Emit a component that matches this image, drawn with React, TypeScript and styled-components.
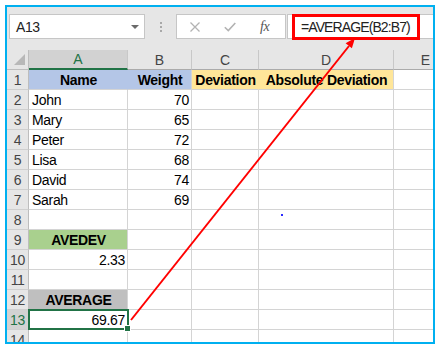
import React from "react";
import styled, { createGlobalStyle, css } from "styled-components";

const Global = createGlobalStyle`
  html, body { margin: 0; padding: 0; background: #fff; }
  body { font-family: "Liberation Sans", Arial, sans-serif; }
`;

const Frame = styled.div`
  position: relative;
  box-sizing: border-box;
  margin: 5px 0 0 5px;
  width: 430px;
  height: 339px;
  border: 2px solid #00b0f0;
  background: #e6e6e6;
  overflow: hidden;
  display: flex;
  flex-direction: column;
`;

const Toolbar = styled.div`
  display: flex;
  align-items: flex-start;
  height: 43px;
  flex: none;
  padding: 7px 0 0 2px;
  box-sizing: border-box;
`;

const NameBox = styled.div`
  box-sizing: border-box;
  width: 136px;
  height: 25px;
  background: #fff;
  border: 1px solid #c6c6c6;
  display: flex;
  align-items: center;
  justify-content: space-between;
  padding: 0 5px 0 6px;
  font-size: 14px;
  letter-spacing: -0.4px;
  color: #222;
`;

const DropArrow = styled.span`
  width: 0;
  height: 0;
  border-left: 4px solid transparent;
  border-right: 4px solid transparent;
  border-top: 4px solid #6a6a6a;
`;

const Separator = styled.div`
  width: 31px;
  height: 25px;
  display: flex;
  flex-direction: column;
  align-items: center;
  justify-content: center;
  gap: 2px;
`;

const Dot = styled.span`
  width: 2px;
  height: 2px;
  background: #a8a8a8;
`;

const FxBox = styled.div`
  box-sizing: border-box;
  width: 110px;
  height: 25px;
  background: #fff;
  border: 1px solid #c6c6c6;
  display: flex;
  align-items: center;
  padding-left: 13px;
`;

const IconSlot = styled.span<{ $gap?: number }>`
  display: flex;
  align-items: center;
  margin-left: ${(p) => p.$gap ?? 0}px;
`;

const FxText = styled.span`
  font-family: "Liberation Serif", "Times New Roman", serif;
  font-style: italic;
  font-size: 14px;
  color: #555;
  margin-left: 24px;
  letter-spacing: -0.5px;
`;

const FormulaBar = styled.div`
  box-sizing: border-box;
  flex: 1;
  margin-left: 1px;
  height: 25px;
  background: #fff;
  border: 1px solid #c6c6c6;
  border-right: none;
  display: flex;
  align-items: center;
`;

const Highlight = styled.div`
  box-sizing: border-box;
  margin-left: 4px;
  height: 26px;
  border: 3px solid #ff0000;
  padding: 0 7px 0 6px;
  display: flex;
  align-items: center;
  font-size: 14px;
  letter-spacing: -0.9px;
  color: #222;
`;

const Sheet = styled.div`
  flex: 1;
  display: grid;
  grid-template-columns: 22px 99px 64px 67px 135px 64px;
  grid-auto-rows: 20px;
  align-content: start;
  background: #fff;
`;

const Corner = styled.div`
  box-sizing: border-box;
  background: #e6e6e6;
  border-right: 1px solid #bdbdbd;
  border-bottom: 1px solid #bdbdbd;
  display: flex;
  align-items: flex-end;
  justify-content: flex-end;
  padding: 0 3px 4px 0;
`;

const CornerTriangle = styled.span`
  width: 0;
  height: 0;
  border-left: 11px solid transparent;
  border-bottom: 11px solid #b8b8b8;
`;

const ColHead = styled.div<{ $active?: boolean }>`
  box-sizing: border-box;
  background: #e6e6e6;
  border-right: 1px solid #c8c8c8;
  border-bottom: 1px solid #ababab;
  display: flex;
  align-items: center;
  justify-content: center;
  font-size: 14px;
  color: #444;
  ${(p) =>
    p.$active &&
    css`
      background: #d2d2d2;
      color: #217346;
      border-bottom: 2px solid #217346;
    `}
`;

const RowHead = styled.div<{ $active?: boolean }>`
  box-sizing: border-box;
  background: #e6e6e6;
  border-right: 1px solid #bdbdbd;
  border-bottom: 1px solid #cfcfcf;
  display: flex;
  align-items: center;
  justify-content: center;
  font-size: 14px;
  letter-spacing: -0.4px;
  color: #444;
  ${(p) =>
    p.$active &&
    css`
      background: #d2d2d2;
      color: #217346;
    `}
`;

type Align = "left" | "center" | "right";

const Cell = styled.div<{
  $align?: Align;
  $bold?: boolean;
  $fill?: string;
  $join?: boolean;
}>`
  position: relative;
  box-sizing: border-box;
  border-right: 1px solid ${(p) => (p.$join && p.$fill ? p.$fill : "#d4d4d4")};
  border-bottom: 1px solid #d4d4d4;
  background: ${(p) => p.$fill ?? "#fff"};
  display: flex;
  align-items: center;
  justify-content: ${(p) =>
    p.$align === "center" ? "center" : p.$align === "right" ? "flex-end" : "flex-start"};
  padding: 0 2px 0 3px;
  font-size: 14px;
  letter-spacing: -0.3px;
  font-weight: ${(p) => (p.$bold ? 700 : 400)};
  color: #000;
  white-space: nowrap;
  overflow: visible;
`;

const Selection = styled.span`
  position: absolute;
  left: -1px;
  top: -1px;
  right: -2px;
  bottom: -1px;
  border: 2px solid #217346;
  z-index: 2;
  pointer-events: none;
`;

const FillHandle = styled.span`
  position: absolute;
  right: -4px;
  bottom: -4px;
  width: 5px;
  height: 5px;
  background: #217346;
  border: 1px solid #fff;
`;

const Overlay = styled.svg`
  position: absolute;
  left: 0;
  top: 0;
  z-index: 5;
  pointer-events: none;
`;

const Speck = styled.span`
  position: absolute;
  left: 274px;
  top: 207px;
  width: 2px;
  height: 2px;
  background: #2a2aff;
  z-index: 5;
`;

type CellData = {
  t?: string | number;
  align?: Align;
  bold?: boolean;
  fill?: string;
  join?: boolean;
};

const BLUE = "#b4c6e7";
const YELLOW = "#ffe699";
const GREEN = "#a9d08e";
const GRAY = "#bfbfbf";

const people: [string, number][] = [
  ["John", 70],
  ["Mary", 65],
  ["Peter", 72],
  ["Lisa", 68],
  ["David", 74],
  ["Sarah", 69],
];

const rows: CellData[][] = [
  [
    { t: "Name", align: "center", bold: true, fill: BLUE, join: true },
    { t: "Weight", align: "center", bold: true, fill: BLUE },
    { t: "Deviation", align: "center", bold: true, fill: YELLOW, join: true },
    { t: "Absolute Deviation", align: "center", bold: true, fill: YELLOW },
    {},
  ],
  ...people.map(([n, w]) => [{ t: n }, { t: w, align: "right" as Align }, {}, {}, {}]),
  [{}, {}, {}, {}, {}],
  [{ t: "AVEDEV", align: "center", bold: true, fill: GREEN }, {}, {}, {}, {}],
  [{ t: "2.33", align: "right" }, {}, {}, {}, {}],
  [{}, {}, {}, {}, {}],
  [{ t: "AVERAGE", align: "center", bold: true, fill: GRAY }, {}, {}, {}, {}],
  [{ t: "69.67", align: "right" }, {}, {}, {}, {}],
  [{}, {}, {}, {}, {}],
];

const columns = ["A", "B", "C", "D", "E"];
const SELECTED_ROW = 13;

function CrossIcon() {
  return (
    <svg width="10" height="10" viewBox="0 0 10 10">
      <path d="M0.5 0.5 L9.5 9.5 M9.5 0.5 L0.5 9.5" stroke="#b3b3b3" strokeWidth="1.3" fill="none" />
    </svg>
  );
}

function CheckIcon() {
  return (
    <svg width="12" height="10" viewBox="0 0 12 10">
      <path d="M0.8 5.2 L4.3 8.6 L11.3 1" stroke="#b3b3b3" strokeWidth="1.6" fill="none" />
    </svg>
  );
}

function Arrow() {
  return (
    <Overlay width="426" height="335" viewBox="0 0 426 335">
      <line x1="124" y1="313" x2="342" y2="39" stroke="#ff0000" strokeWidth="2" />
      <polygon points="348,31 344.9,41.3 338.6,36.3" fill="#ff0000" />
    </Overlay>
  );
}

export default function App() {
  return (
    <>
      <Global />
      <Frame>
        <Toolbar>
          <NameBox>
            <span>A13</span>
            <DropArrow />
          </NameBox>
          <Separator>
            <Dot />
            <Dot />
            <Dot />
          </Separator>
          <FxBox>
            <IconSlot>
              <CrossIcon />
            </IconSlot>
            <IconSlot $gap={24}>
              <CheckIcon />
            </IconSlot>
            <FxText>fx</FxText>
          </FxBox>
          <FormulaBar>
            <Highlight>=AVERAGE(B2:B7)</Highlight>
          </FormulaBar>
        </Toolbar>
        <Sheet>
          <Corner>
            <CornerTriangle />
          </Corner>
          {columns.map((c) => (
            <ColHead key={c} $active={c === "A"}>
              {c}
            </ColHead>
          ))}
          {rows.map((row, i) => {
            const rn = i + 1;
            return (
              <React.Fragment key={rn}>
                <RowHead $active={rn === SELECTED_ROW}>{rn}</RowHead>
                {row.map((cell, j) => (
                  <Cell
                    key={j}
                    $align={cell.align}
                    $bold={cell.bold}
                    $fill={cell.fill}
                    $join={cell.join}
                  >
                    {cell.t}
                    {rn === SELECTED_ROW && j === 0 && (
                      <Selection>
                        <FillHandle />
                      </Selection>
                    )}
                  </Cell>
                ))}
              </React.Fragment>
            );
          })}
        </Sheet>
        <Arrow />
        <Speck />
      </Frame>
    </>
  );
}
